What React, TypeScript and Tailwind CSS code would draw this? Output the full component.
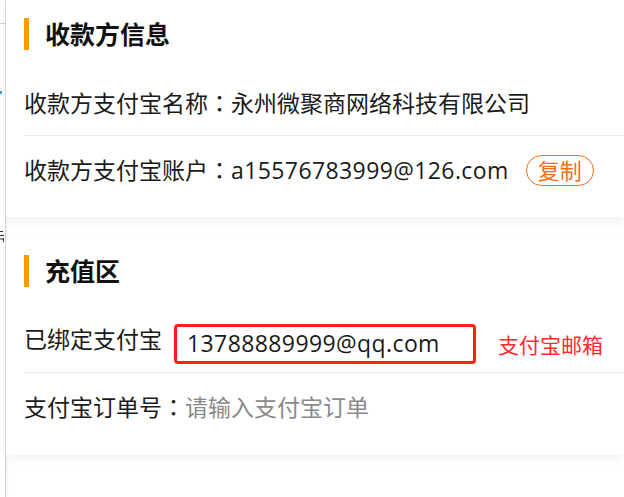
import React from "react";

const font = { fontFamily: '"Open Sans", "Noto Sans CJK SC", sans-serif' };

// full-width colon centred in its em, as in the reference
function Colon() {
  return <span style={{ fontFamily: '"Noto Sans CJK JP", sans-serif' }}>：</span>;
}

function SectionTitle({ children }: { children: React.ReactNode }) {
  return (
    <div className="flex h-[32px] items-center">
      <span className="h-[32px] w-[5px] bg-[#ff9a00]" />
      <h2 className="ml-[16px] text-[25px] font-bold leading-none text-[#111]">{children}</h2>
    </div>
  );
}

function Row({ children, last, h }: { children: React.ReactNode; last?: boolean; h: string }) {
  return (
    <div className={`flex items-center ${h} ${last ? "" : "border-b border-[#ececec]"}`}>
      {children}
    </div>
  );
}

export default function App() {
  return (
    <div className="flex h-[497px] w-[624px] overflow-hidden bg-white text-[#1a1a1a]" style={font}>
      {/* sidebar edge */}
      <div className="flex w-[6px] shrink-0 flex-col overflow-hidden border-r border-[#d9d9d9] bg-white shadow-[1px_0_3px_rgba(0,0,0,0.08)]">
        <div className="h-[24px] border-b border-[#cfcfcf]" />
        <div className="mt-[67px] h-[3px] w-[2px] bg-[#3aa0ff]" />
        <svg className="mt-[136px]" width="5" height="12" viewBox="0 0 5 12">
          <path d="M0 1.5h3M0 5.5h4M0 9h4" stroke="#333" strokeWidth="1" />
          <path d="M3.5 8v4" stroke="#333" strokeWidth="1" />
        </svg>
      </div>

      <div className="flex-1">
        {/* 收款方信息 */}
        <section className="bg-white pt-[18px] pb-[13px] shadow-[0_4px_10px_rgba(0,0,0,0.06)]">
          <div className="pl-[18px]">
            <SectionTitle>收款方信息</SectionTitle>
          </div>
          <div className="mt-[20px] pl-[18px] text-[23px]">
            <Row h="h-[66px]">
              <span>
                收款方支付宝名称<Colon />永州微聚商网络科技有限公司
              </span>
            </Row>
            <Row h="h-[68px]" last>
              <span>
                收款方支付宝账户<Colon />
                <span className="tracking-[0.4px]">a15576783999@126.com</span>
              </span>
              <button className="ml-[17px] flex h-[31px] w-[68px] items-center justify-center rounded-full border border-[#f07020] text-[22px] leading-none text-[#f26f1a]">
                复制
              </button>
            </Row>
          </div>
        </section>

        {/* 充值区 */}
        <section className="mt-[20px] bg-white pt-[18px] pb-[14px] shadow-[0_4px_10px_rgba(0,0,0,0.06)]">
          <div className="pl-[18px]">
            <SectionTitle>充值区</SectionTitle>
          </div>
          <div className="mt-[20px] pl-[18px] text-[23px]">
            <Row h="h-[66px]">
              <span>已绑定支付宝</span>
              <div className="ml-[12px] mt-[8px] flex h-[40px] w-[302px] items-center rounded-[4px] border-[3px] border-[#ff2015] pl-[10px] tracking-[0.4px]">
                13788889999@qq.com
              </div>
              <span className="ml-[22px] mt-[12px] text-[21px] text-[#ff2a2a]">支付宝邮箱</span>
            </Row>
            <Row h="h-[68px]" last>
              <span>
                支付宝订单号<Colon />
              </span>
              <span className="text-[#8a8a8a]">请输入支付宝订单</span>
            </Row>
          </div>
        </section>
      </div>
    </div>
  );
}
